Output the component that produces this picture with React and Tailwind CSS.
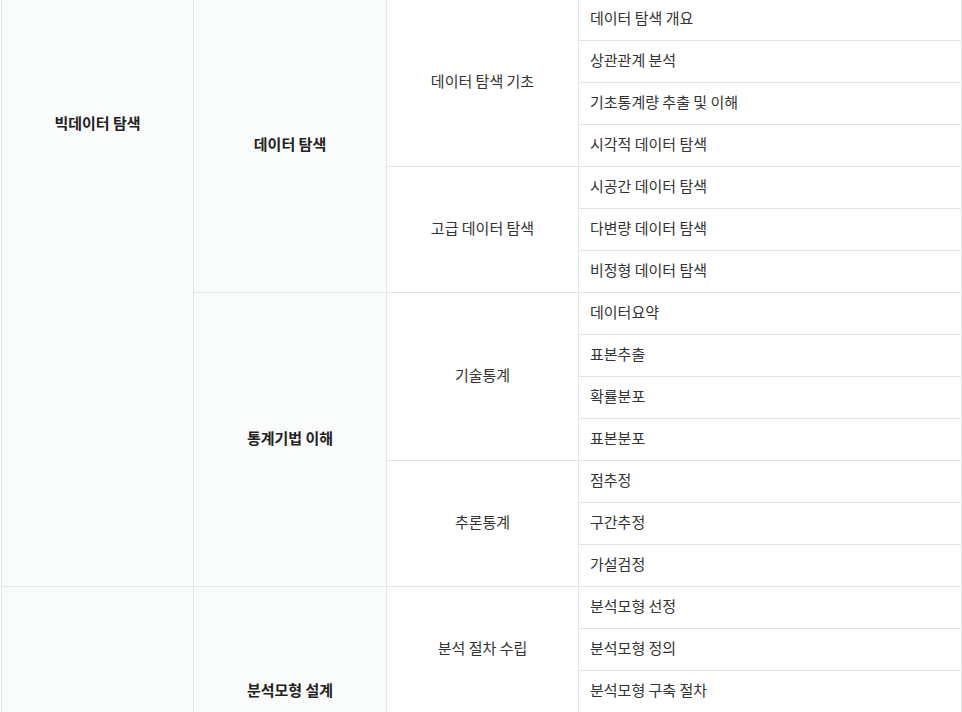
import React from "react";

const data = [
  {
    c1: "빅데이터 탐색",
    groups: [
      {
        c2: "데이터 전처리",
        subs: [
          { c3: "데이터 정제", items: ["데이터 정제", "데이터 결측값 처리", "데이터 이상값 처리"] },
          { c3: "분석 변수 처리", items: ["변수 선택", "차원축소", "파생변수 생성", "변수 변환", "불균형 데이터 처리"] },
        ],
      },
      {
        c2: "데이터 탐색",
        subs: [
          { c3: "데이터 탐색 기초", items: ["데이터 탐색 개요", "상관관계 분석", "기초통계량 추출 및 이해", "시각적 데이터 탐색"] },
          { c3: "고급 데이터 탐색", items: ["시공간 데이터 탐색", "다변량 데이터 탐색", "비정형 데이터 탐색"] },
        ],
      },
      {
        c2: "통계기법 이해",
        subs: [
          { c3: "기술통계", items: ["데이터요약", "표본추출", "확률분포", "표본분포"] },
          { c3: "추론통계", items: ["점추정", "구간추정", "가설검정"] },
        ],
      },
    ],
  },
  {
    c1: "빅데이터 모델링",
    groups: [
      {
        c2: "분석모형 설계",
        subs: [
          { c3: "분석 절차 수립", items: ["분석모형 선정", "분석모형 정의", "분석모형 구축 절차"] },
          { c3: "분석 환경 구축", items: ["분석 도구 선정", "데이터 분할"] },
        ],
      },
      {
        c2: "분석기법 적용",
        subs: [
          { c3: "분석기법", items: ["회귀분석", "로지스틱 회귀분석", "의사결정나무", "인공신경망", "서포트벡터머신", "연관성분석", "군집분석"] },
        ],
      },
    ],
  },
];

export default function App() {
  const rows = [];
  data.forEach((sec, si) => {
    const secCount = sec.groups.reduce((a, g) => a + g.subs.reduce((b, s) => b + s.items.length, 0), 0);
    let firstSec = true;
    sec.groups.forEach((g, gi) => {
      const gCount = g.subs.reduce((b, s) => b + s.items.length, 0);
      let firstG = true;
      g.subs.forEach((s, ssi) => {
        s.items.forEach((it, ii) => {
          rows.push(
            <tr key={`${si}-${gi}-${ssi}-${ii}`}>
              {firstSec && (
                <td rowSpan={secCount} className="border border-[#e3e5e6] bg-[#fafbfb] pb-[3px] text-center align-middle font-bold text-[#222]">
                  {sec.c1}
                </td>
              )}
              {firstG && (
                <td rowSpan={gCount} className="border border-[#e3e5e6] bg-[#fafbfb] pb-[3px] text-center align-middle font-bold text-[#222]">
                  {g.c2}
                </td>
              )}
              {ii === 0 && (
                <td rowSpan={s.items.length} className="border border-[#e3e5e6] bg-white pb-[3px] text-center align-middle text-[#333]">
                  {s.c3}
                </td>
              )}
              <td className="h-[42px] border border-[#e3e5e6] bg-white px-[11px] pb-[3px] text-left align-middle text-[#333]">{it}</td>
            </tr>
          );
          firstSec = false;
          firstG = false;
        });
      });
    });
  });

  return (
    <div className="h-[712px] w-[962px] overflow-hidden bg-white" style={{ fontFamily: '"Noto Sans CJK KR", "Noto Sans", sans-serif' }}>
      <table className="-mt-[338px] ml-[1px] w-[961px] table-fixed border-collapse text-[15px] leading-[20px]">
        <colgroup>
          <col className="w-[192px]" />
          <col className="w-[193px]" />
          <col className="w-[192px]" />
          <col />
        </colgroup>
        <tbody>{rows}</tbody>
      </table>
    </div>
  );
}
